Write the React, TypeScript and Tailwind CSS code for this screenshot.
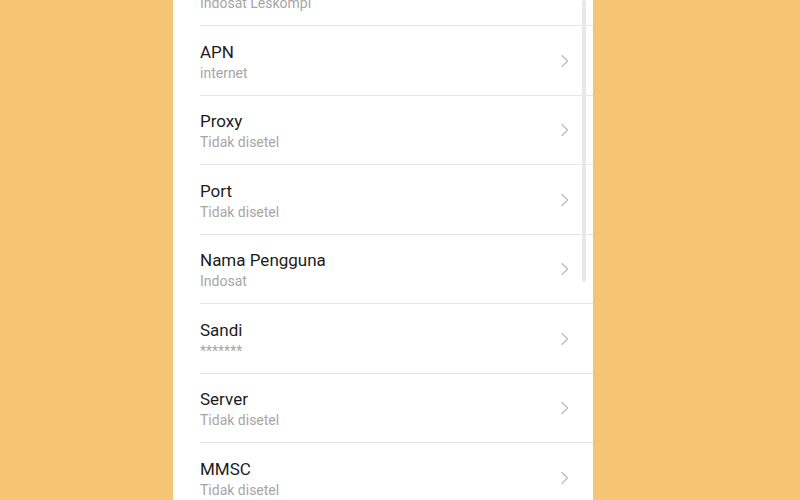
import React from "react";

const rows: { title: string; sub: string; h: string }[] = [
  { title: "", sub: "Indosat Leskompi", h: "h-[70px]" },
  { title: "APN", sub: "internet", h: "h-[70px]" },
  { title: "Proxy", sub: "Tidak disetel", h: "h-[69px]" },
  { title: "Port", sub: "Tidak disetel", h: "h-[70px]" },
  { title: "Nama Pengguna", sub: "Indosat", h: "h-[69px]" },
  { title: "Sandi", sub: "*******", h: "h-[70px]" },
  { title: "Server", sub: "Tidak disetel", h: "h-[69px]" },
  { title: "MMSC", sub: "Tidak disetel", h: "h-[70px]" },
];

function Chevron() {
  return (
    <svg width="8" height="14" viewBox="0 0 8 14" fill="none">
      <path d="M1 1.5 L6.5 7 L1 12.5" stroke="#bdbdbd" strokeWidth="1.3" strokeLinecap="round" strokeLinejoin="round" />
    </svg>
  );
}

export default function App() {
  return (
    <div className="w-[800px] h-[500px] bg-[#f6c574] overflow-hidden flex">
      <div className="relative ml-[173px] w-[420px] h-[500px] bg-white overflow-hidden" style={{ fontFamily: "Roboto, 'Noto Sans', sans-serif" }}>
        <div className="mt-[-44px] flex flex-col">
          {rows.map((r, i) => (
            <div key={i} className={`${r.h} pl-[27px] flex shrink-0`}>
              <div className="flex-1 border-b border-[#e4e4e4] flex items-center">
                <div className="flex-1 flex flex-col pt-[2px]">
                  <div className="h-[22px] text-[17px] leading-[22px] text-[#1c1c1c]">{r.title}</div>
                  <div className="text-[14px] leading-[19px] text-[#a6a6a6] mt-[1px]">{r.sub}</div>
                </div>
                <div className="w-[32px] flex items-center">
                  <Chevron />
                </div>
              </div>
            </div>
          ))}
        </div>
        <div className="absolute left-[409px] top-0 w-[4px] h-[282px] rounded-full bg-[#e8e8e8]" />
      </div>
    </div>
  );
}
